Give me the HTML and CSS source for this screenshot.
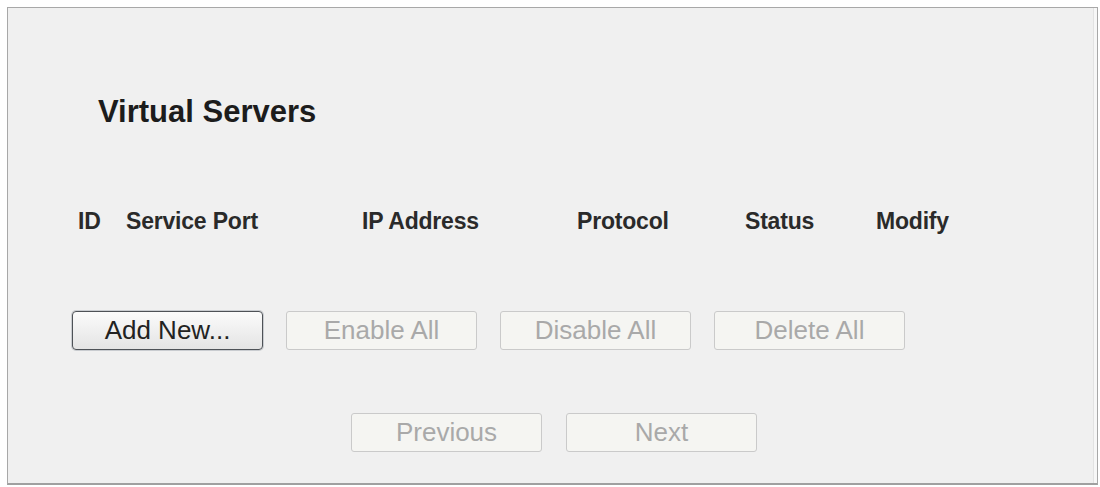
FILE: index.html
```html
<!DOCTYPE html>
<html lang="en">
<head>
    <meta charset="UTF-8">
    <title>Virtual Servers</title>
    <link rel="stylesheet" href="styles.css">
</head>
<body>
    <div class="panel">
        <h1 class="panel-title">Virtual Servers</h1>

        <div class="vs-head">
            <span>ID</span>
            <span>Service Port</span>
            <span>IP Address</span>
            <span>Protocol</span>
            <span>Status</span>
            <span>Modify</span>
        </div>

        <div class="btn-row">
            <button class="btn">Add New...</button>
            <button class="btn" disabled>Enable All</button>
            <button class="btn" disabled>Disable All</button>
            <button class="btn" disabled>Delete All</button>
        </div>

        <div class="pager">
            <button class="btn" disabled>Previous</button>
            <button class="btn" disabled>Next</button>
        </div>
    </div>
</body>
</html>
```

FILE: styles.css
```css
/* Basic page */
body {
    margin: 0;
    background-color: #ffffff;
    font-family: "Liberation Sans", Arial, sans-serif;
    color: #222;
}

/* Settings panel */
.panel {
    box-sizing: border-box;
    width: 1091px;
    height: 478px;
    margin: 7px 0 0 7px;
    background-color: #f0f0f0;
    border: 1px solid #a8a8a8;
    border-bottom: 2px solid #a0a0a0;
    box-shadow: inset -3px 0 0 #f7f7f7, inset -4px 0 0 #e2e2e2;
}

.panel-title {
    margin: 86px 0 0 90px;
    font-size: 31px;
    line-height: 36px;
    font-weight: bold;
    color: #1c1c1c;
}

/* Table header */
.vs-head {
    display: grid;
    grid-template-columns: 48px 236px 215px 168px 131px auto;
    margin: 77px 0 0 70px;
    font-size: 23px;
    line-height: 28px;
    font-weight: bold;
    color: #2a2a2a;
    letter-spacing: -0.2px;
}

/* Buttons */
.btn-row {
    display: flex;
    gap: 23px;
    margin: 76px 0 0 64px;
}

.pager {
    display: flex;
    justify-content: center;
    gap: 24px;
    margin-top: 63px;
    padding-left: 3px;
}

.btn {
    box-sizing: border-box;
    width: 191px;
    height: 39px;
    padding: 0;
    font-family: "Liberation Sans", Arial, sans-serif;
    font-size: 26px;
    color: #222;
    background: linear-gradient(#fbfbfb, #e4e4e4);
    border: 1px solid #4e5257;
    border-radius: 4px;
    box-shadow: 0 0 0 1px #c9ccd0;
}

.btn:disabled {
    color: #a9a9a9;
    background: #f5f5f2;
    border-color: #cacaca;
    border-radius: 3px;
    box-shadow: none;
}
```
